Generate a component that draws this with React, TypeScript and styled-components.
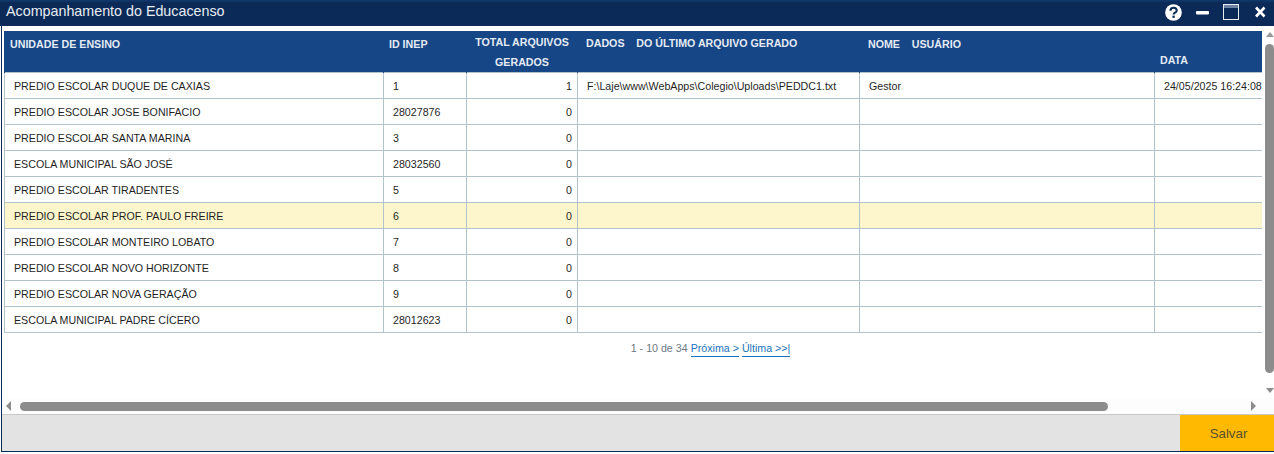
import React from "react";
import styled, { createGlobalStyle } from "styled-components";

const GlobalStyle = createGlobalStyle`
  html, body {
    margin: 0;
    padding: 0;
    background: #fff;
    overflow: hidden;
  }
  * { box-sizing: border-box; }
`;

const Window = styled.div`
  width: 1273px;
  height: 452px;
  margin-left: 1px;
  display: flex;
  flex-flow: column nowrap;
  border: solid #0b2a57;
  border-width: 0 0 1px 1px;
  font-family: "Liberation Sans", Arial, sans-serif;
  background: #fff;
`;

const TitleBar = styled.div`
  height: 26px;
  flex: none;
  margin-left: -2px;
  padding: 0 8px 0 6px;
  display: flex;
  align-items: center;
  justify-content: space-between;
  background: linear-gradient(#123a6e 0, #0b2a57 3px);
`;

const Title = styled.span`
  color: #e8edf3;
  font-size: 14.3px;
  position: relative;
  top: -2px;
`;

const Controls = styled.div`
  display: flex;
  align-items: center;
  gap: 14px;
  position: relative;
  top: -1px;
`;

const Middle = styled.div`
  flex: 1;
  display: flex;
  min-height: 0;
`;

const Viewport = styled.div`
  flex: 1;
  overflow: hidden;
  padding: 5px 0 0 2px;
`;

const Table = styled.table`
  border-collapse: collapse;
  table-layout: fixed;
  width: 1412px;
  font-size: 10.67px;
  color: #1f1f1f;
`;

const HeadRow = styled.tr`
  height: 41px;
  background: #164686;
`;

const HeadCell = styled.th<{ $left?: number; $lift?: number }>`
  color: #e4ebf4;
  font-size: 10.67px;
  font-weight: bold;
  text-align: left;
  border-left: 1px solid #164686;
  padding: 0 0 ${(p) => p.$lift ?? 0}px ${(p) => p.$left ?? 5}px;
  vertical-align: middle;
  white-space: pre;
`;

const DateHead = styled(HeadCell)`
  vertical-align: bottom;
`;

const TotalHead = styled(HeadCell)`
  text-align: center;
  padding: 1px 0 0;
  line-height: 20px;
  white-space: normal;
`;

const Row = styled.tr<{ $selected?: boolean }>`
  height: 26px;
  background: ${(p) => (p.$selected ? "#fdf6cc" : "#fff")};
`;

const Cell = styled.td<{ $right?: boolean }>`
  border: 1px solid #b3c3cb;
  padding: ${(p) => (p.$right ? "1px 5px 0 9px" : "1px 0 0 9px")};
  text-align: ${(p) => (p.$right ? "right" : "left")};
  white-space: nowrap;
  overflow: hidden;
`;

const Pager = styled.div`
  margin-top: 9px;
  width: 1413px;
  display: flex;
  justify-content: center;
  gap: 3px;
  font-size: 10.67px;
  line-height: 13px;
  color: #6d7780;
`;

const PagerLink = styled.a`
  color: #1b74bd;
  border-bottom: 1px solid #1b74bd;
  padding-bottom: 1px;
  text-decoration: none;
`;

const VTrack = styled.div`
  width: 12px;
  flex: none;
  display: flex;
  flex-flow: column nowrap;
  align-items: flex-end;
  padding-top: 6px;
`;

const VThumb = styled.div`
  width: 9px;
  height: 329px;
  margin: 7px 0 auto;
  border-radius: 5px;
  background: #8c8c8c;
`;

const ArrowUp = styled.div`
  width: 0;
  height: 0;
  border: solid transparent;
  border-width: 0 4.5px 5px;
  border-bottom-color: #9a9a9a;
`;

const ArrowDown = styled.div`
  width: 0;
  height: 0;
  margin-bottom: 5px;
  border: solid transparent;
  border-width: 5px 4.5px 0;
  border-top-color: #8c8c8c;
`;

const HTrack = styled.div`
  height: 16px;
  flex: none;
  display: flex;
  align-items: center;
  padding: 0 18px 0 4px;
  background: #fdfdfd;
`;

const ArrowLeft = styled.div`
  width: 0;
  height: 0;
  border: solid transparent;
  border-width: 5px 5px 5px 0;
  border-right-color: #8c8c8c;
`;

const ArrowRight = styled.div`
  width: 0;
  height: 0;
  margin-left: auto;
  border: solid transparent;
  border-width: 5px 0 5px 5px;
  border-left-color: #8c8c8c;
`;

const HThumb = styled.div`
  width: 1088px;
  height: 9px;
  margin-left: 9px;
  border-radius: 5px;
  background: #8c8c8c;
`;

const Footer = styled.div`
  height: 37px;
  flex: none;
  display: flex;
  justify-content: flex-end;
  background: #e3e3e3;
  border-top: 1px solid #c8c8c8;
`;

const SaveButton = styled.button`
  width: 94px;
  border: none;
  background: #ffb900;
  color: #5a5130;
  font-family: inherit;
  font-size: 13.3px;
  padding: 0 0 0 3px;
`;

const rows = [
  { name: "PREDIO ESCOLAR DUQUE DE CAXIAS", inep: "1", total: 1, file: "F:\\Laje\\www\\WebApps\\Colegio\\Uploads\\PEDDC1.txt", user: "Gestor", date: "24/05/2025 16:24:08" },
  { name: "PREDIO ESCOLAR JOSE BONIFACIO", inep: "28027876", total: 0 },
  { name: "PREDIO ESCOLAR SANTA MARINA", inep: "3", total: 0 },
  { name: "ESCOLA MUNICIPAL SÃO JOSÉ", inep: "28032560", total: 0 },
  { name: "PREDIO ESCOLAR TIRADENTES", inep: "5", total: 0 },
  { name: "PREDIO ESCOLAR PROF. PAULO FREIRE", inep: "6", total: 0, selected: true },
  { name: "PREDIO ESCOLAR MONTEIRO LOBATO", inep: "7", total: 0 },
  { name: "PREDIO ESCOLAR NOVO HORIZONTE", inep: "8", total: 0 },
  { name: "PREDIO ESCOLAR NOVA GERAÇÃO", inep: "9", total: 0 },
  { name: "ESCOLA MUNICIPAL PADRE CÍCERO", inep: "28012623", total: 0 },
];

const HelpIcon = () => (
  <svg width="17" height="17" viewBox="0 0 18 18">
    <circle cx="9" cy="9" r="8.8" fill="#fff" />
    <path d="M5.800 7.200c0-4.400 6.600-4.200 6.600-.4 0 2.400-3.300 2.300-3.300 4.300" fill="none" stroke="#0b2a57" strokeWidth="2.200" />
    <rect x="7.900" y="12.300" width="2.400" height="2.400" fill="#0b2a57" />
  </svg>
);

const MinimizeIcon = () => (
  <svg width="13" height="17" viewBox="0 0 13 17">
    <rect x="0" y="7" width="13" height="3.500" rx="1" fill="#fff" />
  </svg>
);

const MaximizeIcon = () => (
  <svg width="16" height="16" viewBox="0 0 16 16">
    <rect x="0.500" y="0.500" width="15" height="15" fill="none" stroke="#e8edf3" />
    <rect x="1" y="1" width="14" height="3" fill="#6f84a3" />
  </svg>
);

const CloseIcon = () => (
  <svg width="13" height="12" viewBox="0 0 13 12">
    <path d="M3 1.500l8.500 9M11.500 1.500l-8.500 9" stroke="#fff" strokeWidth="2.600" />
  </svg>
);

export default function App() {
  return (
    <>
      <GlobalStyle />
      <Window>
        <TitleBar>
          <Title>Acompanhamento do Educacenso</Title>
          <Controls>
            <HelpIcon />
            <MinimizeIcon />
            <MaximizeIcon />
            <CloseIcon />
          </Controls>
        </TitleBar>
        <Middle>
          <Viewport>
            <Table>
              <colgroup>
                <col width="379" />
                <col width="83" />
                <col width="111" />
                <col width="282" />
                <col width="295" />
                <col width="262" />
              </colgroup>
              <thead>
                <HeadRow>
                  <HeadCell $lift={15}>UNIDADE DE ENSINO</HeadCell>
                  <HeadCell $lift={15}>ID INEP</HeadCell>
                  <TotalHead>TOTAL ARQUIVOS GERADOS</TotalHead>
                  <HeadCell $lift={17} $left={8}>{"DADOS    DO ÚLTIMO ARQUIVO GERADO"}</HeadCell>
                  <HeadCell $lift={15} $left={8}>{"NOME    USUÁRIO"}</HeadCell>
                  <DateHead $lift={6}>DATA</DateHead>
                </HeadRow>
              </thead>
              <tbody>
                {rows.map((row) => (
                  <Row key={row.name} $selected={row.selected}>
                    <Cell>{row.name}</Cell>
                    <Cell>{row.inep}</Cell>
                    <Cell $right>{row.total}</Cell>
                    <Cell>{row.file}</Cell>
                    <Cell>{row.user}</Cell>
                    <Cell>{row.date}</Cell>
                  </Row>
                ))}
              </tbody>
            </Table>
            <Pager>
              <span>1 - 10 de 34</span>
              <PagerLink href="#">Próxima &gt;</PagerLink>
              <PagerLink href="#">Última &gt;&gt;|</PagerLink>
            </Pager>
          </Viewport>
          <VTrack>
            <ArrowUp />
            <VThumb />
            <ArrowDown />
          </VTrack>
        </Middle>
        <HTrack>
          <ArrowLeft />
          <HThumb />
          <ArrowRight />
        </HTrack>
        <Footer>
          <SaveButton>Salvar</SaveButton>
        </Footer>
      </Window>
    </>
  );
}
